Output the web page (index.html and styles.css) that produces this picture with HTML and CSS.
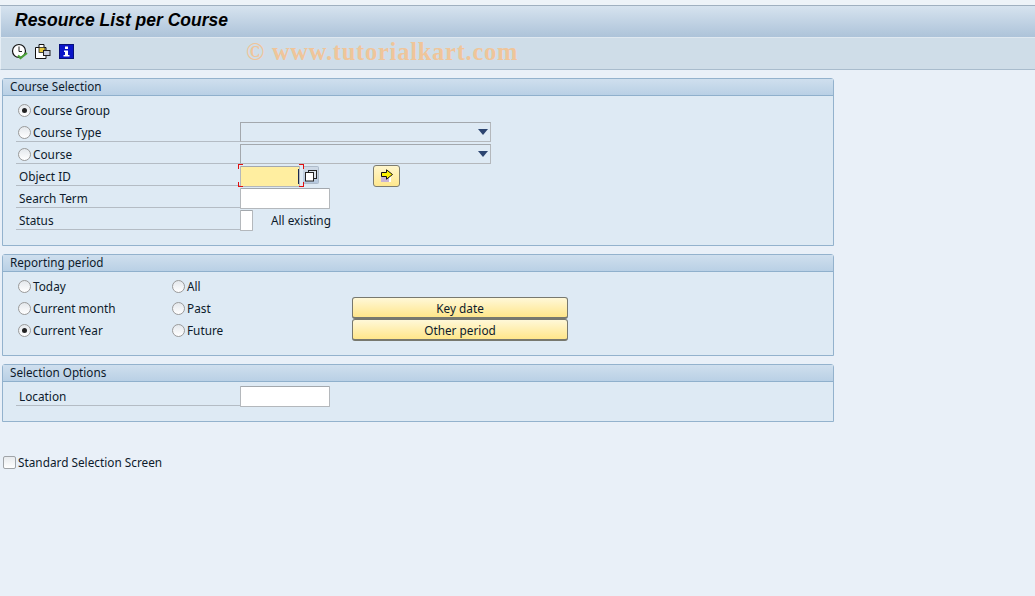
FILE: index.html
```html
<!DOCTYPE html>
<html lang="en">
<head>
<meta charset="utf-8">
<title>Resource List per Course</title>
<link rel="stylesheet" href="styles.css">
</head>
<body>
<div class="top-strip"></div>
<header class="title-bar"><h1>Resource List per Course</h1></header>
<div class="toolbar">
  <svg class="tool tool-clock" width="18" height="18" viewBox="0 0 18 18">
    <circle cx="8" cy="8" r="6.5" fill="#fff" stroke="#111" stroke-width="1.2"/>
    <path d="M8 3.500V8.500H11" fill="none" stroke="#222" stroke-width="1"/>
    <path d="M7 12.500L9.500 15L16 10" fill="none" stroke="#4aa038" stroke-width="2.200"/>
  </svg>
  <svg class="tool tool-copy" width="16" height="16" viewBox="0 0 16 16">
    <path d="M.5 3.500H4V.5H9V3.500H11V14.500H.5Z" fill="#fff" stroke="#111"/>
    <rect x="4" y="3.500" width="6" height="5" fill="#e6c93c" stroke="#222" stroke-width=".8"/>
    <rect x="8.500" y="6.500" width="6.500" height="5" fill="#c9cfe0" stroke="#222"/>
  </svg>
  <svg class="tool tool-info" width="15" height="15" viewBox="0 0 15 15">
    <rect x=".5" y=".5" width="14" height="14" fill="#0a14c8" stroke="#07107a"/>
    <rect x="6" y="2.500" width="3" height="2.500" fill="#fff"/>
    <path d="M5 6.500H9V11H10.500V12.500H4.500V11H6V8H5Z" fill="#fff"/>
  </svg>
  <span class="watermark">© www.tutorialkart.com</span>
</div>

<main class="content">
  <section class="group">
    <h2 class="group-head">Course Selection</h2>
    <div class="group-body">
      <div class="row">
        <label class="cell"><span class="radio on"></span><span class="radio-text">Course Group</span></label>
      </div>
      <div class="row">
        <label class="cell lined"><span class="radio"></span><span class="radio-text">Course Type</span></label>
        <span class="combo"><span class="combo-arrow"></span></span>
      </div>
      <div class="row">
        <label class="cell lined"><span class="radio"></span><span class="radio-text">Course</span></label>
        <span class="combo"><span class="combo-arrow"></span></span>
      </div>
      <div class="row">
        <label class="cell lined text-label">Object ID</label>
        <span class="focus-field">
          <span class="input input-active"><span class="caret"></span></span>
          <span class="corner tl"></span><span class="corner tr"></span><span class="corner bl"></span><span class="corner br"></span>
        </span>
        <span class="help-btn">
          <svg width="13" height="13" viewBox="0 0 13 13"><rect x="4.500" y="1.500" width="8" height="8" fill="#dfe6ee" stroke="#222"/><rect x="1.500" y="3.500" width="8" height="8.500" fill="#fff" stroke="#222"/></svg>
        </span>
        <span class="arrow-btn">
          <svg width="14" height="14" viewBox="0 0 14 14"><rect x="1" y="5" width="9" height="8" fill="#c8b4d4"/><rect x="9" y="6" width="2" height="7" fill="#fff"/><path d="M1.500 3.500H6.500V.8L12.500 5.500L6.500 10.200V7.500H1.500Z" fill="#fdf000" stroke="#111"/></svg>
        </span>
      </div>
      <div class="row">
        <label class="cell lined text-label">Search Term</label>
        <span class="input input-wide"></span>
      </div>
      <div class="row">
        <label class="cell lined text-label">Status</label>
        <span class="input input-tiny"></span>
        <span class="status-text">All existing</span>
      </div>
    </div>
  </section>

  <section class="group">
    <h2 class="group-head">Reporting period</h2>
    <div class="group-body period">
      <div class="row">
        <label class="period-a"><span class="radio"></span><span class="radio-text">Today</span></label>
        <label class="period-b"><span class="radio"></span><span class="radio-text">All</span></label>
      </div>
      <div class="row">
        <label class="period-a"><span class="radio"></span><span class="radio-text">Current month</span></label>
        <label class="period-b"><span class="radio"></span><span class="radio-text">Past</span></label>
        <button class="push" type="button">Key date</button>
      </div>
      <div class="row">
        <label class="period-a"><span class="radio on"></span><span class="radio-text">Current Year</span></label>
        <label class="period-b"><span class="radio"></span><span class="radio-text">Future</span></label>
        <button class="push" type="button">Other period</button>
      </div>
    </div>
  </section>

  <section class="group">
    <h2 class="group-head">Selection Options</h2>
    <div class="group-body">
      <div class="row">
        <label class="cell lined text-label">Location</label>
        <span class="input input-wide"></span>
      </div>
    </div>
  </section>

  <label class="check-row"><span class="checkbox"></span><span>Standard Selection Screen</span></label>
</main>
</body>
</html>
```

FILE: styles.css
```css
* { box-sizing: border-box; }
html, body { height: 100%; }
body {
  margin: 0;
  overflow: hidden;
  background: #e9f0f8;
  color: #0d1a2b;
  font-family: "Noto Sans", sans-serif;
  font-size: 11.800px;
}
.top-strip {
  height: 6px;
  background: #edf3f8;
  border-bottom: 1px solid #9fb0c0;
}
.title-bar {
  height: 31px;
  display: flex;
  align-items: center;
  padding-left: 14px;
  border-left: 1px solid #e6eef5;
  background: linear-gradient(#d6e3ef, #adc3d9);
}
.title-bar h1 {
  margin: 0 0 3px;
  font: italic bold 17.500px "Liberation Sans", sans-serif;
  color: #000;
}
.toolbar {
  height: 33px;
  display: flex;
  align-items: flex-start;
  border-top: 1px solid #dfe8f0;
  border-left: 1px solid #e6eef5;
  border-bottom: 1px solid #a9bccd;
  background: #cfdde8;
}
.tool { flex: none; }
.tool-clock { margin: 5px 0 0 10px; }
.tool-copy { margin: 6px 0 0 6px; }
.tool-info { margin: 6px 0 0 8px; }
.watermark {
  margin: 0 0 0 172px;
  font: bold 24.500px "Liberation Serif", serif;
  letter-spacing: 0.750px;
  color: #efc59a;
  white-space: nowrap;
}
.content { padding: 8px 0 0 2px; }
.group {
  width: 832px;
  margin-bottom: 8px;
  border: 1px solid #93b2cd;
  border-radius: 3px 3px 0 0;
  background: #deeaf4;
}
.group-head {
  height: 17px;
  margin: 0;
  padding-left: 7px;
  border-bottom: 1px solid #8fb0cc;
  background: linear-gradient(#cfdfee, #b9d0e5);
  font-size: 11.700px;
  font-weight: normal;
  line-height: 15px;
}
.group-body { padding: 2px 0 15px 13px; }
.row {
  height: 22px;
  display: flex;
  align-items: flex-start;
}
.cell {
  width: 224px;
  height: 22px;
  flex: none;
  display: flex;
  align-items: center;
  padding: 2px 0 0 2px;
}
.lined {
  padding-top: 3px;
  border-bottom: 1px solid #b4bcc4;
}
.text-label { padding-left: 3px; }
.radio {
  width: 13px;
  height: 13px;
  flex: none;
  display: flex;
  align-items: center;
  justify-content: center;
  border: 1px solid #9a9a9a;
  border-radius: 50%;
  background: linear-gradient(#e4e8ec, #fff);
}
.radio.on::after {
  content: "";
  width: 5px;
  height: 5px;
  border-radius: 50%;
  background: #222;
}
.radio-text { margin-left: 2px; white-space: nowrap; }
.combo {
  width: 251px;
  height: 20px;
  margin-top: 2px;
  position: relative;
  border: 1px solid #b4b8bc;
  border-top-color: #a3a8ad;
  border-left-color: #a3a8ad;
  background: #deeaf4;
}
.combo-arrow {
  position: absolute;
  right: 2px;
  top: 6px;
  width: 10px;
  height: 6px;
  background: #2b4470;
  clip-path: polygon(0 0, 100% 0, 50% 100%);
}
.input {
  display: block;
  height: 21px;
  flex: none;
  border: 1px solid #b4b8bc;
  border-top-color: #a3a8ad;
  border-radius: 1px;
  background: #fff;
}
.input-wide { width: 90px; margin-top: 2px; }
.input-tiny { width: 13px; margin-top: 2px; }
.input-active {
  position: relative;
  width: 60px;
  margin-top: 2px;
  background: #ffeea0;
}
.caret {
  position: absolute;
  right: 0;
  top: 2px;
  width: 1px;
  height: 15px;
  background: #1a2a50;
}
.focus-field {
  position: relative;
  display: block;
  flex: none;
  width: 61px;
  height: 22px;
}
.corner {
  position: absolute;
  width: 5px;
  height: 5px;
  border: 0 solid #e01010;
}
.tl { left: -2px; top: 0; border-width: 1px 0 0 1px; }
.tr { right: -3px; top: 0; border-width: 1px 1px 0 0; }
.bl { left: -2px; bottom: -1px; border-width: 0 0 1px 1px; }
.br { right: -3px; bottom: -1px; border-width: 0 1px 1px 0; }
.help-btn {
  width: 16px;
  height: 18px;
  margin: 2px 0 0 2px;
  flex: none;
  display: flex;
  align-items: center;
  justify-content: center;
  border: 1px solid #aebccb;
  border-left: 0;
  border-radius: 0 2px 2px 0;
  background: linear-gradient(#cfdae6, #b5c8de);
}
.arrow-btn {
  width: 27px;
  height: 22px;
  margin: 1px 0 0 54px;
  flex: none;
  display: flex;
  align-items: center;
  justify-content: center;
  border: 1px solid #7d7d70;
  border-radius: 3px;
  background: linear-gradient(#fff6cc, #ffe88e);
}
.status-text { margin: 4px 0 0 18px; }
.period-a, .period-b {
  height: 22px;
  flex: none;
  display: flex;
  align-items: center;
  padding-top: 2px;
}
.period-a { width: 156px; padding-left: 2px; }
.period-b { width: 180px; }
.push {
  width: 216px;
  height: 22px;
  margin-top: 1px;
  flex: none;
  padding: 1px 0 0;
  border: 1px solid #77786e;
  border-bottom-width: 2px;
  border-radius: 3px;
  background: linear-gradient(#fff8d8, #ffe68a);
  color: #0d1a2b;
  font: inherit;
  line-height: 18px;
}
.check-row {
  display: flex;
  align-items: center;
  height: 14px;
  margin: 33px 0 0 1px;
}
.checkbox {
  width: 13px;
  height: 13px;
  margin-right: 2px;
  flex: none;
  border: 1px solid #a0a4a8;
  border-radius: 2px;
  background: linear-gradient(#e8ebee, #fff);
}
```
